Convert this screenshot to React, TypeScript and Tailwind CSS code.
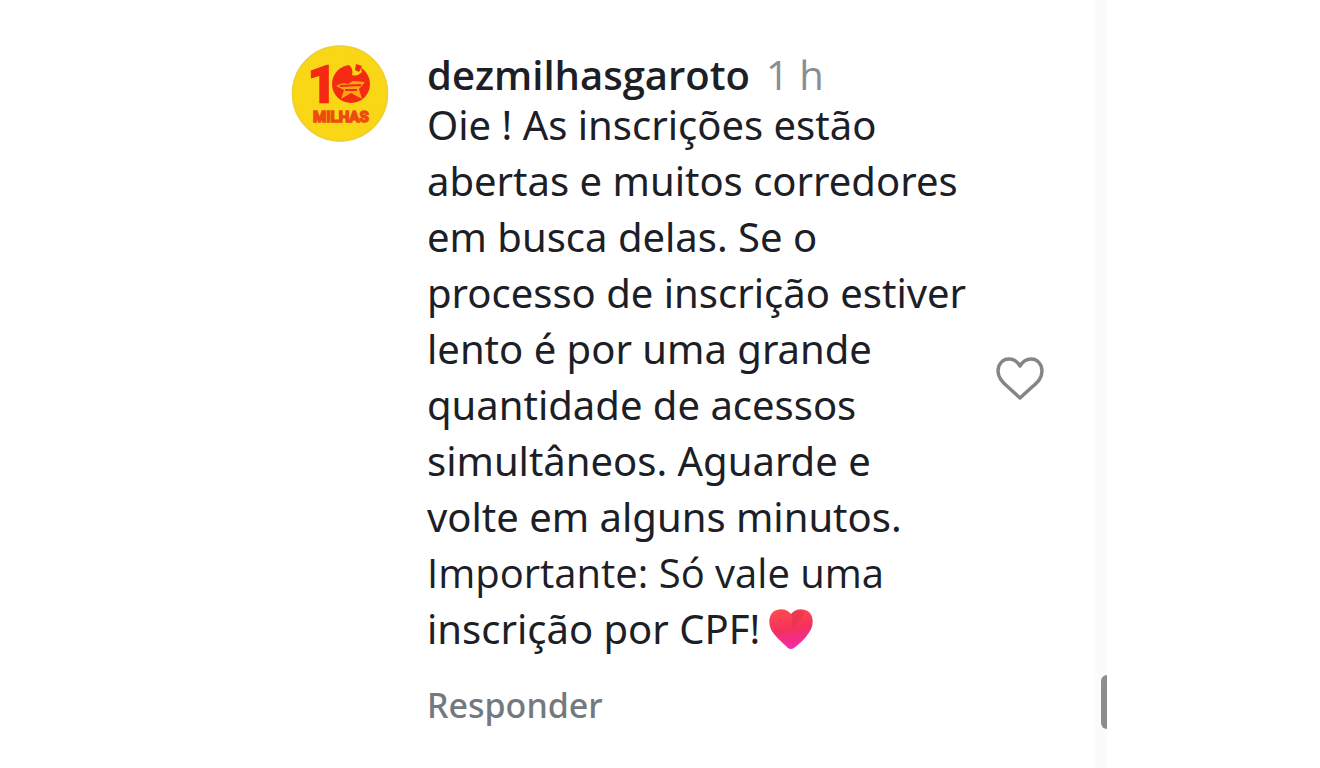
const lines = [
  'Oie ! As inscrições estão',
  'abertas e muitos corredores',
  'em busca delas. Se o',
  'processo de inscrição estiver',
  'lento é por uma grande',
  'quantidade de acessos',
  'simultâneos. Aguarde e',
  'volte em alguns minutos.',
];

function Avatar() {
  return (
    <svg viewBox="0 0 98 98" className="size-[98px] shrink-0" role="img" aria-label="10 Milhas">
      <circle cx="49" cy="49.5" r="48" fill="#f9d616" />
      <circle cx="49" cy="49.5" r="47.5" fill="none" stroke="#edcf38" strokeWidth="1.5" />
      <text fontFamily="Roboto, sans-serif" fontWeight="700" fill="#f52a12" stroke="#f52a12">
        <tspan x="17" y="58" fontSize="50" strokeWidth="2.5">1</tspan>
        <tspan x="22" y="78" fontSize="15" strokeWidth="1.5" fill="#ee4b10" stroke="#ee4b10">MILHAS</tspan>
      </text>
      <circle cx="60" cy="40" r="19" fill="#f52a12" />
      <path d="M57 20 Q63 25 61 31 Q66 33 71 28 L69 21 Q64 19 57 20Z" fill="#f9d616" />
      <path d="M65 20 L71 22 L68 28 L64 26Z" fill="#f52a12" />
      <path d="M45 42 Q51 38 57 40 L62 37 L74 38 L68 45 L71 55 L60 49 L50 55 L53 46Z" fill="#f9a516" />
      <path d="M49 42 L70 41 M54 46 L66 46" stroke="#f52a12" strokeWidth="2" />
    </svg>
  );
}

function RedHeart() {
  return (
    <svg viewBox="0 0 46 42" className="ml-2 inline-block h-[42px] w-[46px] align-[-6px]" role="img" aria-label="❤">
      <defs>
        <linearGradient id="heart" x1="0.35" y1="0" x2="0.55" y2="1">
          <stop offset="0" stopColor="#ff4b50" />
          <stop offset="0.5" stopColor="#f4315c" />
          <stop offset="1" stopColor="#f329ad" />
        </linearGradient>
      </defs>
      <path d="M23 6C19 0 10 0 5 4C-1 10 1 20 6 26C11 32 16 36 20 40Q23 42 26 40C31 36 36 32 40 26C45 20 47 10 41 4C36 0 27 0 23 6Z" fill="url(#heart)" />
      <path d="M23 7Q26 13 23 20Q32 14 37 4Q28 0 23 7Z" fill="#d92d48" opacity=".4" />
    </svg>
  );
}

export default function App() {
  return (
    <div className="flex min-h-screen bg-white pr-[213px] font-['Noto_Sans','Open_Sans',sans-serif] text-[#1c2026]">
      <main className="flex flex-1 items-start pl-[291px] pt-11">
        <Avatar />
        <article className="ml-[38px] w-[568px] shrink-0 whitespace-nowrap pt-2">
          <header className="flex items-center gap-4 font-['Open_Sans','Noto_Sans',sans-serif] text-[40px] leading-[45px]">
            <h1 className="font-semibold">dezmilhasgaroto</h1>
            <time className="text-[#8a8d93]">1 h</time>
          </header>
          <p className="text-[40px] leading-14">
            {lines.map((line) => (
              <span key={line} className="block">{line}</span>
            ))}
            <span className="block font-['Open_Sans','Noto_Sans',sans-serif]">Importante: Só vale uma</span>
            <span className="block">inscrição por CPF!<RedHeart /></span>
          </p>
          <button type="button" className="mt-6 text-[34px] leading-[48px] font-medium text-[#737980]">Responder</button>
        </article>
        <button type="button" aria-label="Curtir" className="mt-[312px] shrink-0">
          <svg viewBox="0 0 50 46" className="h-[46px] w-[50px]" fill="none" stroke="#858585" strokeWidth="3.5" strokeLinejoin="round">
            <path d="M25 10C22 5 18 3 14 3C7 3 3 9 3 15C3 22 8 27 13 31L25 42L37 31C43 26 47 22 47 15C47 9 43 3 36 3C31 3 28 5 25 10Z" />
          </svg>
        </button>
      </main>
      <aside className="flex w-[13px] items-end justify-end bg-[#fbfbfb] pb-[39px]">
        <div className="h-[54px] w-1.5 rounded-l-md bg-[#8d8d8d]" />
      </aside>
    </div>
  );
}
